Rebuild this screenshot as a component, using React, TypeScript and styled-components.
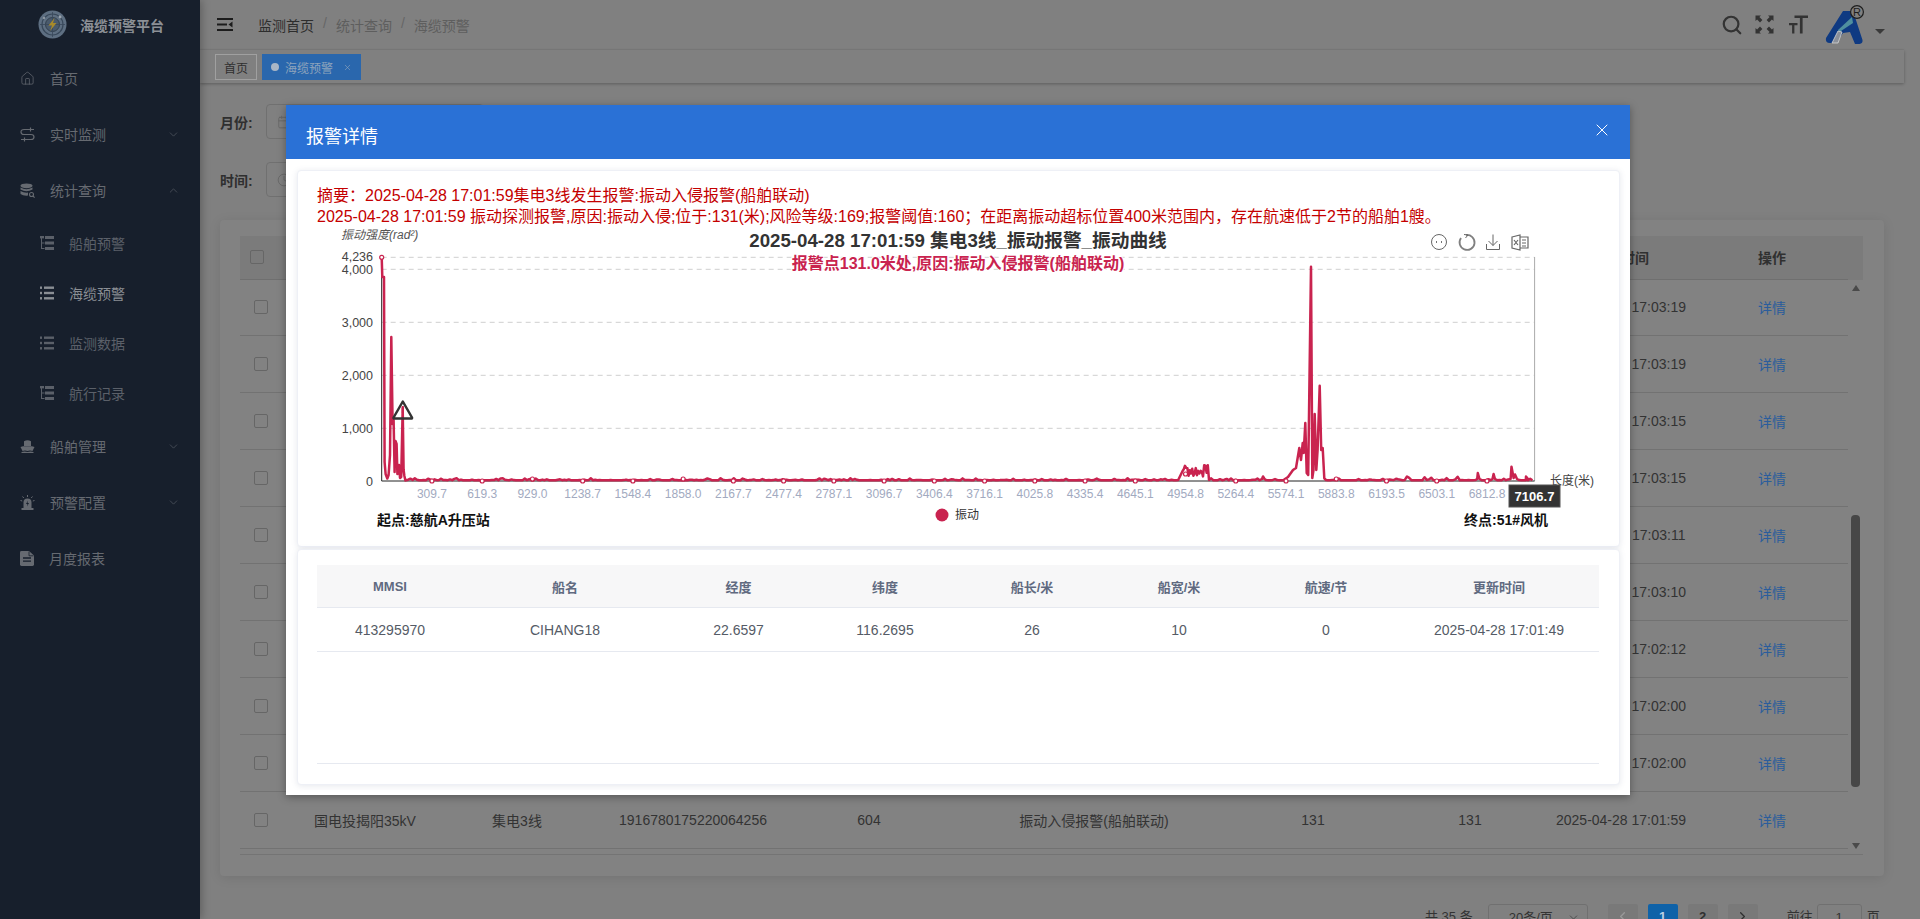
import React from "react";
import styled, { createGlobalStyle } from "styled-components";
import { ChevronDown, ChevronUp, ChevronLeft, ChevronRight, House, Search, X, Calendar, Clock } from "lucide-react";

const FONT = `"Liberation Sans", "Noto Sans CJK SC", sans-serif`;

const GlobalStyle = createGlobalStyle`
  html, body {
    margin: 0;
    height: 100%;
    overflow: hidden;
    background: #808080;
    font-family: ${FONT};
  }
  * {
    box-sizing: border-box;
  }
`;

const Shell = styled.div`
  position: relative;
  display: flex;
  width: 1920px;
  height: 919px;
  overflow: hidden;
`;

const Sidebar = styled.aside`
  width: 200px;
  flex-shrink: 0;
  background: #171f2c;
  box-shadow: 2px 0 8px rgba(0, 0, 0, 0.25);
  z-index: 1;
`;

const Brand = styled.div`
  height: 50px;
  display: flex;
  align-items: center;
  padding: 0 0 1px 38px;
  gap: 13px;
  color: #8c9096;
  font-size: 14px;
  font-weight: 700;
`;

const MenuItem = styled.div<{ $sub?: boolean; $active?: boolean }>`
  height: ${(p) => (p.$sub ? 50 : 56)}px;
  display: flex;
  align-items: center;
  gap: 15px;
  padding-left: ${(p) => (p.$sub ? 40 : 20)}px;
  font-size: 14px;
  color: ${(p) => (p.$active ? "#8a8e94" : p.$sub ? "#5b6069" : "#666a71")};
  svg {
    flex-shrink: 0;
  }
`;

const MenuArrow = styled.span`
  margin-left: auto;
  margin-right: 20px;
  display: flex;
  color: #5b6069;
`;

const MainArea = styled.div`
  width: 1704px;
  display: flex;
  flex-direction: column;
`;

const Navbar = styled.header`
  height: 50px;
  display: flex;
  align-items: center;
  padding: 0 19px 0 17px;
  background: #808080;
  border-bottom: 1px solid #7c7c7c;
`;

const Breadcrumb = styled.nav`
  margin-left: 25px;
  display: flex;
  font-size: 14px;
  color: #5e5e5e;
`;

const CrumbSep = styled.span`
  margin: 0 9px;
  color: #666;
`;

const CrumbHome = styled.span`
  color: #2d2d2d;
`;

const NavTools = styled.div`
  margin-left: auto;
  display: flex;
  align-items: center;
  color: #333;
`;

const NavTool = styled.span<{ $gap: number }>`
  display: flex;
  margin-right: ${(p) => p.$gap}px;
`;

const Caret = styled.span`
  width: 0;
  height: 0;
  margin: 14px 0 0 3px;
  border-left: 5px solid transparent;
  border-right: 5px solid transparent;
  border-top: 5px solid #3a3a3a;
`;

const TagsBar = styled.div`
  height: 33px;
  display: flex;
  gap: 5px;
  padding: 4px 0 0 15px;
  background: #808080;
  box-shadow: 0 1px 3px rgba(0, 0, 0, 0.28);
`;

const Tag = styled.span<{ $active?: boolean }>`
  height: 26px;
  display: flex;
  align-items: center;
  gap: 5px;
  padding: 0 8px;
  font-size: 12px;
  border: 1px solid ${(p) => (p.$active ? "#2a67ad" : "#a0a0a0")};
  background: ${(p) => (p.$active ? "#2a67ad" : "#808080")};
  color: ${(p) => (p.$active ? "#8ea4bc" : "#2f2f2f")};
`;

const TagDot = styled.i`
  width: 8px;
  height: 8px;
  border-radius: 50%;
  background: #a9b6c6;
  margin-right: 1px;
`;

const TagClose = styled.span`
  display: flex;
  margin-left: 5px;
  color: #8ea4bc;
`;

const Content = styled.main`
  flex: 1;
  padding: 21px 20px 0;
  min-height: 0;
`;

const FilterRow = styled.div`
  height: 35px;
  margin-bottom: 23px;
  display: flex;
  align-items: center;
  gap: 13px;
  font-size: 14px;
  font-weight: 700;
  color: #2f2f2f;
`;

const FilterInput = styled.div`
  width: 218px;
  height: 35px;
  display: flex;
  align-items: center;
  padding-left: 10px;
  border: 1px solid #707070;
  border-radius: 4px;
  color: #666;
`;

const TableCard = styled.section`
  height: 656px;
  margin-top: 23px;
  padding: 16px 20px 0;
  background: #828282;
  border-radius: 4px;
  box-shadow: 0 2px 12px rgba(0, 0, 0, 0.1);
`;

const COLUMNS = "53px 144px 160px 192px 160px 290px 148px 166px 136px 159px";

const TableHead = styled.div`
  width: 1623px;
  height: 44px;
  background: #7b7b7b;
`;

const HeadRow = styled.div`
  width: 1608px;
  height: 44px;
  padding-bottom: 2px;
  display: grid;
  grid-template-columns: ${COLUMNS};
  align-items: center;
  text-align: center;
  font-size: 14px;
  font-weight: 700;
  color: #303030;
  border-bottom: 1px solid #6f6f6f;
`;

const TableBody = styled.div`
  display: flex;
  width: 1623px;
  height: 575px;
  border-bottom: 1px solid #747474;
`;

const Rows = styled.div`
  width: 1608px;
  margin-top: -1px;
`;

const Row = styled.div`
  height: 57px;
  display: grid;
  grid-template-columns: ${COLUMNS};
  align-items: center;
  text-align: center;
  font-size: 14px;
  color: #333;
  border-bottom: 1px solid #727272;
`;

const CheckBox = styled.i<{ $head?: boolean }>`
  display: block;
  width: 14px;
  height: 14px;
  margin-left: ${(p) => (p.$head ? 10 : 14)}px;
  border: 1px solid #666;
  border-radius: 2px;
`;

const LinkCell = styled.span`
  padding-left: 7px;
  color: #2a5d9c;
`;

const ActionHead = styled.span`
  padding-left: 7px;
`;

const ScrollTrack = styled.div`
  width: 15px;
  display: flex;
  flex-direction: column;
  align-items: center;
`;

const ScrollArrow = styled.i<{ $down?: boolean }>`
  display: block;
  width: 0;
  height: 0;
  margin-top: ${(p) => (p.$down ? 56 : 5)}px;
  border-left: 4.5px solid transparent;
  border-right: 4.5px solid transparent;
  ${(p) => (p.$down ? "border-top: 6px solid #4a4a4a;" : "border-bottom: 6px solid #4a4a4a;")}
`;

const ScrollThumb = styled.i`
  display: block;
  width: 9px;
  height: 272px;
  margin-top: 224px;
  border-radius: 4px;
  background: #474747;
`;

const Pagination = styled.div`
  height: 28px;
  margin-top: 28px;
  display: flex;
  align-items: flex-start;
  padding-left: 1205px;
  font-size: 13px;
  line-height: 26px;
  color: #333;
`;

const PageSelect = styled.div`
  width: 100px;
  height: 28px;
  margin: 0 20px 0 15px;
  display: flex;
  justify-content: space-between;
  padding: 0 7px 0 20px;
  border: 1px solid #707070;
  border-radius: 3px;
  svg {
    margin-top: 6px;
  }
`;

const PageButton = styled.span<{ $current?: boolean }>`
  width: 30px;
  height: 28px;
  margin-right: 10px;
  display: flex;
  justify-content: center;
  border-radius: 2px;
  font-weight: 700;
  background: ${(p) => (p.$current ? "#0f62a8" : "#797979")};
  color: ${(p) => (p.$current ? "#b9cfe3" : "#303030")};
  svg {
    margin-top: 5px;
  }
`;

const PageJump = styled.div`
  width: 45px;
  height: 28px;
  margin: 0 5px 0 4px;
  text-align: center;
  border: 1px solid #707070;
  border-radius: 3px;
`;

const JumpLabel = styled.span`
  margin-left: 19px;
`;

const Modal = styled.div`
  position: absolute;
  left: 286px;
  top: 105px;
  width: 1344px;
  height: 690px;
  z-index: 5;
  background: #fff;
  box-shadow: 0 2px 8px rgba(0, 0, 0, 0.35);
`;

const ModalHead = styled.div`
  height: 54px;
  display: flex;
  align-items: center;
  justify-content: space-between;
  padding: 6px 18px 0 20px;
  background: #2a71d6;
  color: #fff;
  font-size: 18px;
`;

const ModalClose = styled.span`
  display: flex;
  margin-top: -11px;
`;

const ModalBody = styled.div`
  height: 636px;
  padding: 11px 10px 10px 11px;
  display: flex;
  flex-direction: column;
  gap: 2px;
`;

const Panel = styled.div`
  background: #fff;
  border-radius: 4px;
  border: 1px solid #eef0f6;
  box-shadow: 0 1px 6px rgba(80, 90, 130, 0.14);
`;

const ChartPanel = styled(Panel)`
  height: 377px;
  padding-top: 14px;
`;

const SummaryText = styled.div`
  padding-left: 19px;
  font-size: 16px;
  line-height: 21px;
  color: #c40000;
  white-space: nowrap;
`;

const ChartSvg = styled.svg`
  display: block;
  margin: 0 0 0 -1px;
`;

const ShipPanel = styled(Panel)`
  flex: 1;
  padding: 15px 20px 0 19px;
`;

const SHIP_COLUMNS = "146px 204px 143px 150px 144px 150px 144px 202px";

const ShipHead = styled.div`
  height: 43px;
  display: grid;
  grid-template-columns: ${SHIP_COLUMNS};
  align-items: center;
  text-align: center;
  background: #f7f7f8;
  border-bottom: 1px solid #e6e9f0;
  font-size: 13px;
  font-weight: 700;
  color: #606a80;
`;

const ShipRow = styled.div`
  height: 44px;
  display: grid;
  grid-template-columns: ${SHIP_COLUMNS};
  align-items: center;
  text-align: center;
  border-bottom: 1px solid #e6e9f0;
  font-size: 14px;
  color: #555b66;
`;

const ShipFooter = styled.div`
  height: 112px;
  border-bottom: 1px solid #e6e9f0;
`;

const ChartTitle = styled.text`
  font-size: 18.7px;
  font-weight: 700;
  fill: #333;
  text-anchor: middle;
`;

const ChartSub = styled.text`
  font-size: 16px;
  font-weight: 700;
  fill: #c9234f;
  text-anchor: middle;
  paint-order: stroke;
  stroke: #fff;
  stroke-width: 2px;
`;

const AxisName = styled.text`
  font-size: 12px;
  font-style: italic;
  fill: #555;
`;

const YTick = styled.text`
  font-size: 12.5px;
  fill: #444;
  text-anchor: end;
`;

const XTick = styled.text`
  font-size: 12px;
  fill: #a2aabf;
  text-anchor: middle;
`;

const EndLabel = styled.text`
  font-size: 12px;
  fill: #444;
`;

const NodeLabel = styled.text`
  font-size: 14px;
  font-weight: 700;
  fill: #111;
`;

const TipText = styled.text`
  font-size: 13px;
  font-weight: 700;
  fill: #fff;
  text-anchor: middle;
`;

const LegendText = styled.text`
  font-size: 12px;
  fill: #333;
`;

const X0 = 381.7;
const X1 = 1534.6;
const Y0 = 481;

const buildCurve = () => {
  let seed = 11;
  const rnd = () => {
    seed = (seed * 16807) % 2147483647;
    return seed / 2147483647;
  };
  const fixed: number[][] = [
    [X0, 257.3], [382.3, 277], [384, 277], [384.6, 462], [385.6, 474], [387.3, 478.5], [388.6, 475],
    [390, 455], [391.3, 337], [392.6, 424], [393.6, 420], [394.6, 472], [395.5, 441], [396.6, 444],
    [397.4, 474], [398.2, 470], [399, 465], [400, 478], [401.2, 477], [402.7, 408], [403.6, 470],
    [404.4, 476], [405.4, 480.5],
    [1262, 479], [1263, 476.5], [1264.5, 479],
    [1285, 479], [1288, 477], [1293, 470], [1296, 468], [1299.3, 448], [1301, 460], [1302.7, 443],
    [1303.7, 453], [1305.3, 423], [1306.7, 473], [1308.2, 475], [1311, 266.7], [1312.3, 478],
    [1313.5, 470], [1314.7, 414], [1316.3, 470], [1317.6, 450], [1319.7, 385.7], [1321.2, 450],
    [1322.7, 448], [1324.3, 478.3], [1326, 480],
    [1477.2, 479], [1477.8, 473], [1479.5, 479],
    [1492.5, 479], [1493.6, 474], [1495, 479],
    [1510.6, 479], [1511.5, 466.7], [1513.6, 478], [1515, 474.5], [1517, 479], [1526, 476.5], [1528, 479],
  ];
  for (let x = 1182.6; x < 1208; x += 1.2) {
    fixed.push([x, 471 - rnd() * 6 + (rnd() > 0.5 ? 6 : 0)]);
  }
  const isBusy = (x: number) =>
    x < 406 || (x > 1180 && x < 1209) || (x > 1261 && x < 1265) || (x > 1284 && x < 1327) ||
    (x > 1476 && x < 1480) || (x > 1492 && x < 1496) || (x > 1510 && x < 1518);
  for (let x = 406; x < X1; x += 2.2) {
    if (!isBusy(x)) {
      const lift = x > 1400 ? 2.2 : 1;
      fixed.push([x, 480.2 - Math.pow(rnd(), 6) * lift * 2]);
    }
  }
  return fixed.sort((a, b) => a[0] - b[0]);
};

const curve = buildCurve();
const curvePath = curve.map((p, i) => `${i ? "L" : "M"}${p[0].toFixed(1)} ${p[1].toFixed(1)}`).join("");

const xTicks = [
  "309.7", "619.3", "929.0", "1238.7", "1548.4", "1858.0", "2167.7", "2477.4", "2787.1", "3096.7", "3406.4",
  "3716.1", "4025.8", "4335.4", "4645.1", "4954.8", "5264.4", "5574.1", "5883.8", "6193.5", "6503.1", "6812.8",
];
const tickX = (i: number) => X0 + (i + 1) * 50.24;

const yTicks: [string, number][] = [
  ["4,000", 269.3],
  ["3,000", 322.3],
  ["2,000", 375.3],
  ["1,000", 428.3],
];

const VibrationChart: React.FC = () => (
  <ChartSvg width={1323} height={320} viewBox="297 227 1323 320">
    {[257.3, 269.3, 322.3, 375.3, 428.3].map((y) => (
      <line key={y} x1={X0} x2={X1} y1={y} y2={y} stroke="#cfcfcf" strokeDasharray="5 4" />
    ))}
    <line x1={X1} x2={X1} y1={257} y2={Y0} stroke="#aaa" />
    <line x1={X0} x2={X0} y1={257} y2={Y0} stroke="#222" />
    <line x1={X0} x2={X1} y1={Y0} y2={Y0} stroke="#222" />

    <AxisName x={341} y={239}>振动强度(rad²)</AxisName>
    <YTick x={373} y={261}>4,236</YTick>
    {yTicks.map(([label, y]) => (
      <YTick key={label} x={373} y={y + 4.5}>{label}</YTick>
    ))}
    <YTick x={373} y={485.5}>0</YTick>

    <path d={curvePath} fill="none" stroke="#c9234f" strokeWidth={2.5} strokeLinejoin="round" />
    <circle cx={X0} cy={257.3} r={2} fill="#fff" stroke="#c9234f" strokeWidth={1.2} />
    {xTicks.map((label, i) => {
      const x = tickX(i);
      const cy = label === "4954.8" ? 474 : label === "929.0" || label === "1858.0" || label === "5883.8" ? 479 : 481;
      return (
        <React.Fragment key={label}>
          <circle cx={x} cy={cy} r={2} fill="#fff" stroke="#c9234f" strokeWidth={1.2} />
          <XTick x={x} y={498}>{label}</XTick>
        </React.Fragment>
      );
    })}

    <path d="M402.8 401.5 L412 417.5 Q412.4 418.6 411 418.6 H394.6 Q393.2 418.6 393.6 417.5 Z" fill="none" stroke="#333" strokeWidth={2.5} strokeLinejoin="round" />
    <path d="M402.8 406 V413" stroke="#c9234f" strokeWidth={2} />

    <ChartTitle x={958} y={247}>2025-04-28 17:01:59 集电3线_振动报警_振动曲线</ChartTitle>
    <ChartSub x={958} y={269}>报警点131.0米处,原因:振动入侵报警(船舶联动)</ChartSub>

    <g fill="none" stroke="#666" strokeWidth={1}>
      <circle cx={1439} cy={242} r={7.5} />
      <path d="M1437 241.2 L1436 242 L1437 242.8 M1441 241.2 L1442 242 L1441 242.8" />
      <path d="M1461 238 A7.5 7.5 0 1 0 1466 235" strokeWidth={1.8} stroke="#808080" />
      <path d="M1464 234.5 L1468 235 L1465.5 238" strokeWidth={1} />
      <path d="M1493 234.5 V245.5 M1488.5 241 L1493 245.5 L1497.5 241 M1486.5 244 V249.5 H1499.5 V244" />
      <path d="M1512 237 L1520 235 V250 L1512 248 Z" strokeWidth={1.2} />
      <path d="M1520 237 H1528 V248 H1520 M1522 240 H1526 M1522 243 H1526 M1522 246 H1526" strokeWidth={1.2} />
      <path d="M1514 240 L1518 245 M1518 240 L1514 245" strokeWidth={1.2} />
    </g>

    <EndLabel x={1550} y={485}>长度(米)</EndLabel>
    <NodeLabel x={377} y={525}>起点:慈航A升压站</NodeLabel>
    <NodeLabel x={1464} y={525}>终点:51#风机</NodeLabel>
    <circle cx={942} cy={515} r={6.5} fill="#c9234f" />
    <LegendText x={955} y={519}>振动</LegendText>

    <rect x={1509} y={485} width={51} height={22} fill="#333" stroke="#555" />
    <TipText x={1534.5} y={501}>7106.7</TipText>
  </ChartSvg>
);

const TreeIcon = () => (
  <svg width="14" height="14" viewBox="0 0 14 14" fill="currentColor">
    <rect x="0" y="0" width="4" height="2.4" />
    <rect x="5" y="0" width="9" height="3" />
    <rect x="5" y="5.5" width="9" height="3" />
    <rect x="5" y="11" width="9" height="3" />
    <rect x="1" y="2" width="1" height="10.5" />
    <rect x="1" y="6.5" width="3.5" height="1" />
    <rect x="1" y="12" width="3.5" height="1" />
  </svg>
);

const ListIcon = () => (
  <svg width="14" height="14" viewBox="0 0 14 14" fill="currentColor">
    <rect x="0" y="0.5" width="2" height="2.4" />
    <rect x="4" y="0.5" width="10" height="2.4" />
    <rect x="0" y="5.8" width="2" height="2.4" />
    <rect x="4" y="5.8" width="10" height="2.4" />
    <rect x="0" y="11.1" width="2" height="2.4" />
    <rect x="4" y="11.1" width="10" height="2.4" />
  </svg>
);

const SwapIcon = () => (
  <svg width="15" height="15" viewBox="0 0 15 15" fill="none" stroke="currentColor" strokeWidth="1.2">
    <path d="M14 2.5 H4 Q1 2.5 1 5 T4 7.5 H11 Q14 7.5 14 10 T11 12.5 H1" />
    <path d="M10.5 0.5 L10.5 4.5 M4.5 10.5 L4.5 14.5" />
  </svg>
);

const DatabaseIcon = () => (
  <svg width="15" height="15" viewBox="0 0 15 15" fill="currentColor">
    <ellipse cx="6.5" cy="2.8" rx="6" ry="2.4" />
    <path d="M0.5 4.4 Q6.5 8 12.5 4.4 V6.6 Q6.5 10 0.5 6.6 Z" />
    <path d="M0.5 8 Q4 10 8 9.6 L8 12.6 Q3 13 0.5 11 Z" />
    <circle cx="11.5" cy="11.5" r="2" fill="none" stroke="currentColor" strokeWidth="1.1" />
    <path d="M13 13 L14.6 14.6" stroke="currentColor" strokeWidth="1.1" />
  </svg>
);

const ShipIcon = () => (
  <svg width="15" height="13" viewBox="0 0 15 13" fill="currentColor">
    <path d="M4 1.2 Q7.5 -0.6 11 1.2 V6 H4 Z" />
    <path d="M0.5 7 L3 6.2 H12 L14.5 7 L12.5 11 Q10 9.8 7.5 11 Q5 9.8 2.5 11 Z" />
    <path d="M1.5 12 Q4.5 11 7.5 12 Q10.5 11 13.5 12 V13 H1.5 Z" />
  </svg>
);

const AlarmIcon = () => (
  <svg width="15" height="15" viewBox="0 0 15 15" fill="currentColor">
    <path d="M3.5 13 V7.5 Q3.5 3.5 7.5 3.5 T11.5 7.5 V13 Z" />
    <rect x="1.5" y="13" width="12" height="2" />
    <path d="M8 5.5 L6 9 H7.5 L7 11.5 L9 8 H7.5 Z" fill="#171f2c" />
    <path d="M7.5 0 V2 M2.5 1.5 L3.8 3 M12.5 1.5 L11.2 3 M0.5 5.5 L2.2 6 M14.5 5.5 L12.8 6" stroke="currentColor" strokeWidth="1" />
  </svg>
);

const DocIcon = () => (
  <svg width="14" height="15" viewBox="0 0 14 15" fill="currentColor">
    <path d="M1.5 0 H9 L14 4.6 V13.6 Q14 15 12.5 15 H1.5 Q0 15 0 13.6 V1.4 Q0 0 1.5 0 Z" />
    <path d="M3 7 H11 M3 10.2 H11" stroke="#171f2c" strokeWidth="1.3" />
    <path d="M9 0.5 V4.8 H13.5" fill="none" stroke="#171f2c" strokeWidth="0.8" />
  </svg>
);

const BrandLogo = () => (
  <svg width="29" height="29" viewBox="0 0 29 29">
    <circle cx="14.5" cy="14.5" r="14" fill="#5e6f82" />
    <circle cx="14.5" cy="14.5" r="10.5" fill="none" stroke="#38485a" strokeWidth="1.2" />
    <circle cx="14.5" cy="14.5" r="7" fill="#4a5a6c" stroke="#33414f" />
    <path d="M2 14.5 H27 M14.5 2 V27" stroke="#38485a" strokeWidth="0.8" />
    <circle cx="22" cy="7" r="1.4" fill="#9aa3ad" />
    <circle cx="6" cy="8" r="1.2" fill="#8e97a1" />
    <path d="M16.5 8 L10.5 15.5 H14 L12 21 L18.5 13 H15 Z" fill="#a88a2a" />
  </svg>
);

const MenuIcon = () => (
  <svg width="16" height="13" viewBox="0 0 16 13" fill="#1c1c1c">
    <rect x="0" y="0" width="16" height="2" />
    <rect x="0" y="5.5" width="10" height="2" />
    <rect x="0" y="11" width="16" height="2" />
    <path d="M15.5 3.6 V9.4 L11.5 6.5 Z" />
  </svg>
);

const FullscreenIcon = () => (
  <svg width="19" height="19" viewBox="0 0 19 19" fill="#333">
    <path d="M0.5 0.5 H6 L4.4 2.1 L7.4 5 L5 7.4 L2.1 4.4 L0.5 6 Z" />
    <path d="M18.5 0.5 H13 L14.6 2.1 L11.6 5 L14 7.4 L16.9 4.4 L18.5 6 Z" />
    <path d="M0.5 18.5 H6 L4.4 16.9 L7.4 14 L5 11.6 L2.1 14.6 L0.5 13 Z" />
    <path d="M18.5 18.5 H13 L14.6 16.9 L11.6 14 L14 11.6 L16.9 14.6 L18.5 13 Z" />
  </svg>
);

const FontSizeIcon = () => (
  <svg width="19" height="19" viewBox="0 0 19 19" fill="#333">
    <path d="M5.5 0.5 H19 V3 H13.6 V18.5 H10.9 V3 H5.5 Z" />
    <path d="M0 8 H8.5 V10.2 H5.4 V18.5 H3.1 V10.2 H0 Z" />
  </svg>
);

const AvatarLogo = () => (
  <svg width="48" height="46" viewBox="0 0 48 46">
    <path d="M2 36 L19 9 H29 L38.5 38 Q39 41.5 35.5 42 H31 L26 30 L19 31 L12 41 H6 Q1 41 2 36 Z" fill="#0f3a82" />
    <path d="M28 15 L14 28 L15.5 30 L29 21 Z" fill="#4f8f9e" />
    <path d="M14 29 L8 41 H14 L18 30 Z" fill="#8b9099" stroke="#d5d5d5" strokeWidth="0.8" />
    <circle cx="33" cy="10" r="6.4" fill="#808080" stroke="#1d1d1d" strokeWidth="1.2" />
    <text x="33" y="14" textAnchor="middle" fontSize="11" fill="#1d1d1d" fontFamily={FONT}>R</text>
  </svg>
);

const tableRows = [
  ["17:03:19", "604"],
  ["17:03:19", "604"],
  ["17:03:15", "604"],
  ["17:03:15", "604"],
  ["17:03:11", "604"],
  ["17:03:10", "604"],
  ["17:02:12", "604"],
  ["17:02:00", "604"],
  ["17:02:00", "604"],
  ["17:01:59", "604"],
];

const App: React.FC = () => {
  return (
    <Shell>
      <GlobalStyle />
      <Sidebar>
        <Brand>
          <BrandLogo />
          海缆预警平台
        </Brand>
        <MenuItem><House size={15} strokeWidth={1.2} />首页</MenuItem>
        <MenuItem>
          <SwapIcon />实时监测
          <MenuArrow><ChevronDown size={13} strokeWidth={1.2} /></MenuArrow>
        </MenuItem>
        <MenuItem>
          <DatabaseIcon />统计查询
          <MenuArrow><ChevronUp size={13} strokeWidth={1.2} /></MenuArrow>
        </MenuItem>
        <MenuItem $sub><TreeIcon />船舶预警</MenuItem>
        <MenuItem $sub $active><ListIcon />海缆预警</MenuItem>
        <MenuItem $sub><ListIcon />监测数据</MenuItem>
        <MenuItem $sub><TreeIcon />航行记录</MenuItem>
        <MenuItem>
          <ShipIcon />船舶管理
          <MenuArrow><ChevronDown size={13} strokeWidth={1.2} /></MenuArrow>
        </MenuItem>
        <MenuItem>
          <AlarmIcon />预警配置
          <MenuArrow><ChevronDown size={13} strokeWidth={1.2} /></MenuArrow>
        </MenuItem>
        <MenuItem><DocIcon />月度报表</MenuItem>
      </Sidebar>

      <MainArea>
        <Navbar>
          <MenuIcon />
          <Breadcrumb>
            <CrumbHome>监测首页</CrumbHome>
            <CrumbSep>/</CrumbSep>
            统计查询
            <CrumbSep>/</CrumbSep>
            海缆预警
          </Breadcrumb>
          <NavTools>
            <NavTool $gap={12}><Search size={22} strokeWidth={2.4} /></NavTool>
            <NavTool $gap={15}><FullscreenIcon /></NavTool>
            <NavTool $gap={16}><FontSizeIcon /></NavTool>
            <AvatarLogo />
            <Caret />
          </NavTools>
        </Navbar>
        <TagsBar>
          <Tag>首页</Tag>
          <Tag $active>
            <TagDot />
            海缆预警
            <TagClose><X size={9} strokeWidth={1.6} /></TagClose>
          </Tag>
        </TagsBar>

        <Content>
          <FilterRow>
            月份:
            <FilterInput><Calendar size={14} strokeWidth={1.4} /></FilterInput>
          </FilterRow>
          <FilterRow>
            时间:
            <FilterInput><Clock size={14} strokeWidth={1.4} /></FilterInput>
          </FilterRow>

          <TableCard>
            <TableHead>
              <HeadRow>
                <CheckBox $head />
                <span>风场名称</span>
                <span>线路名称</span>
                <span>报警编号</span>
                <span>风险等级</span>
                <span>报警原因</span>
                <span>报警位置</span>
                <span>事件位置</span>
                <span>报警时间</span>
                <ActionHead>操作</ActionHead>
              </HeadRow>
            </TableHead>
            <TableBody>
              <Rows>
                {tableRows.map(([time, level], i) => (
                  <Row key={i}>
                    <CheckBox />
                    <span>国电投揭阳35kV</span>
                    <span>集电3线</span>
                    <span>1916780175220064256</span>
                    <span>{level}</span>
                    <span>振动入侵报警(船舶联动)</span>
                    <span>131</span>
                    <span>131</span>
                    <span>2025-04-28 {time}</span>
                    <LinkCell>详情</LinkCell>
                  </Row>
                ))}
              </Rows>
              <ScrollTrack>
                <ScrollArrow />
                <ScrollThumb />
                <ScrollArrow $down />
              </ScrollTrack>
            </TableBody>
          </TableCard>

          <Pagination>
            共 35 条
            <PageSelect>20条/页<ChevronDown size={13} strokeWidth={1.2} /></PageSelect>
            <PageButton><ChevronLeft size={15} strokeWidth={2} color="#9a9a9a" /></PageButton>
            <PageButton $current>1</PageButton>
            <PageButton>2</PageButton>
            <PageButton><ChevronRight size={15} strokeWidth={2} /></PageButton>
            <JumpLabel>前往</JumpLabel>
            <PageJump>1</PageJump>
            页
          </Pagination>
        </Content>
      </MainArea>

      <Modal>
        <ModalHead>
          报警详情
          <ModalClose><X size={20} strokeWidth={1.2} /></ModalClose>
        </ModalHead>
        <ModalBody>
          <ChartPanel>
            <SummaryText>摘要：2025-04-28 17:01:59集电3线发生报警:振动入侵报警(船舶联动)</SummaryText>
            <SummaryText>2025-04-28 17:01:59 振动探测报警,原因:振动入侵;位于:131(米);风险等级:169;报警阈值:160；在距离振动超标位置400米范围内，存在航速低于2节的船舶1艘。</SummaryText>
            <VibrationChart />
          </ChartPanel>
          <ShipPanel>
            <ShipHead>
              <span>MMSI</span>
              <span>船名</span>
              <span>经度</span>
              <span>纬度</span>
              <span>船长/米</span>
              <span>船宽/米</span>
              <span>航速/节</span>
              <span>更新时间</span>
            </ShipHead>
            <ShipRow>
              <span>413295970</span>
              <span>CIHANG18</span>
              <span>22.6597</span>
              <span>116.2695</span>
              <span>26</span>
              <span>10</span>
              <span>0</span>
              <span>2025-04-28 17:01:49</span>
            </ShipRow>
            <ShipFooter />
          </ShipPanel>
        </ModalBody>
      </Modal>
    </Shell>
  );
};

export default App;
